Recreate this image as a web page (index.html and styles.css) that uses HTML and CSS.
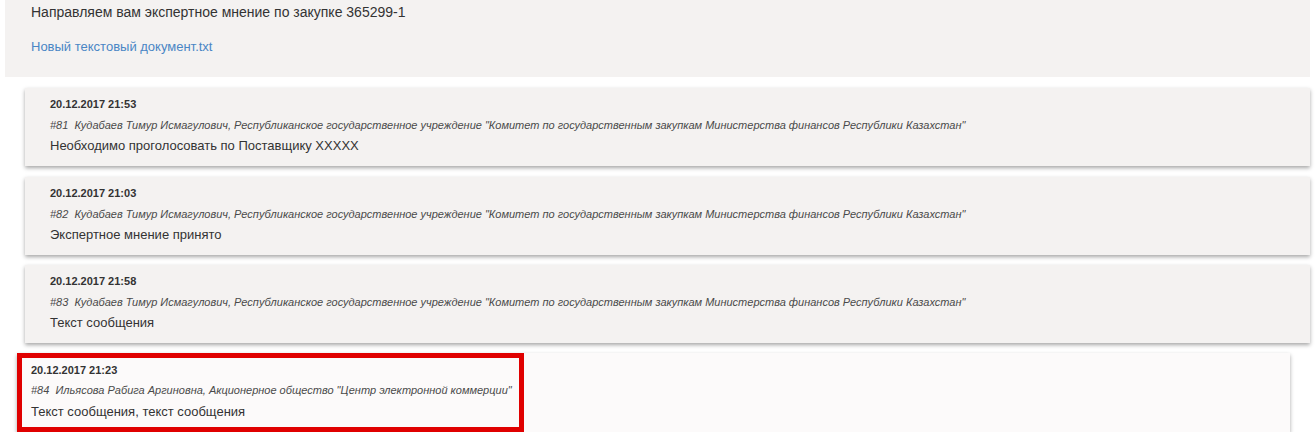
FILE: index.html
```html
<!DOCTYPE html>
<html lang="ru">
<head>
  <meta charset="UTF-8">
  <title>Экспертное мнение</title>
  <meta name="viewport" content="width=device-width, initial-scale=1">
  <link rel="stylesheet" href="styles.css">
</head>
<body>
  <div class="letter">
    <p class="letter-text">Направляем вам экспертное мнение по закупке 365299-1</p>
    <a class="file" href="#">Новый текстовый документ.txt</a>
  </div>

  <div class="comment">
    <div class="date">20.12.2017 21:53</div>
    <div class="meta">#81&nbsp; Кудабаев Тимур Исмагулович, Республиканское государственное учреждение "Комитет по государственным закупкам Министерства финансов Республики Казахстан"</div>
    <div class="msg">Необходимо проголосовать по Поставщику XXXXX</div>
  </div>

  <div class="comment">
    <div class="date">20.12.2017 21:03</div>
    <div class="meta">#82&nbsp; Кудабаев Тимур Исмагулович, Республиканское государственное учреждение "Комитет по государственным закупкам Министерства финансов Республики Казахстан"</div>
    <div class="msg">Экспертное мнение принято</div>
  </div>

  <div class="comment">
    <div class="date">20.12.2017 21:58</div>
    <div class="meta">#83&nbsp; Кудабаев Тимур Исмагулович, Республиканское государственное учреждение "Комитет по государственным закупкам Министерства финансов Республики Казахстан"</div>
    <div class="msg">Текст сообщения</div>
  </div>

  <div class="comment mine">
    <div class="marked">
      <div class="date">20.12.2017 21:23</div>
      <div class="meta">#84&nbsp; Ильясова Рабига Аргиновна, Акционерное общество "Центр электронной коммерции"</div>
      <div class="msg">Текст сообщения, текст сообщения</div>
    </div>
  </div>
</body>
</html>
```

FILE: styles.css
```css
body { margin: 0; font-family: "Liberation Sans", Arial, sans-serif; color: #333; background: #fff; }
.letter { background: #f4f2f1; margin: 0 6px 0 5px; padding: 2px 26px 19px; height: 56px; }
.letter-text { margin: 0; font-size: 14px; line-height: 20px; }
.file { display: inline-block; margin-top: 15px; font-size: 13px; line-height: 20px; color: #4a86c5; text-decoration: none; }
.comment { background: #f4f2f1; margin: 11px 6px 0 25px; padding: 9px 25px 10px; height: 59px; box-shadow: 0 2px 4px rgba(0,0,0,0.35); }
.comment:nth-of-type(4) { margin-top: 10px; }
.date { font-size: 11px; line-height: 14px; font-weight: bold; }
.meta { margin-top: 7px; font-size: 11px; line-height: 14px; font-style: italic; color: #4a4a4a; }
.msg { margin-top: 4px; font-size: 13px; line-height: 20px; }
.mine { background: #fcfafa; margin: 10px 26px 0 17px; padding: 0; height: auto; }
.marked { display: inline-block; vertical-align: top; border: 5px solid #e00000; padding: 5px 7px 5px 9px; }
.marked .meta { margin-top: 6px; }
.marked .msg { margin-top: 5px; }
```
